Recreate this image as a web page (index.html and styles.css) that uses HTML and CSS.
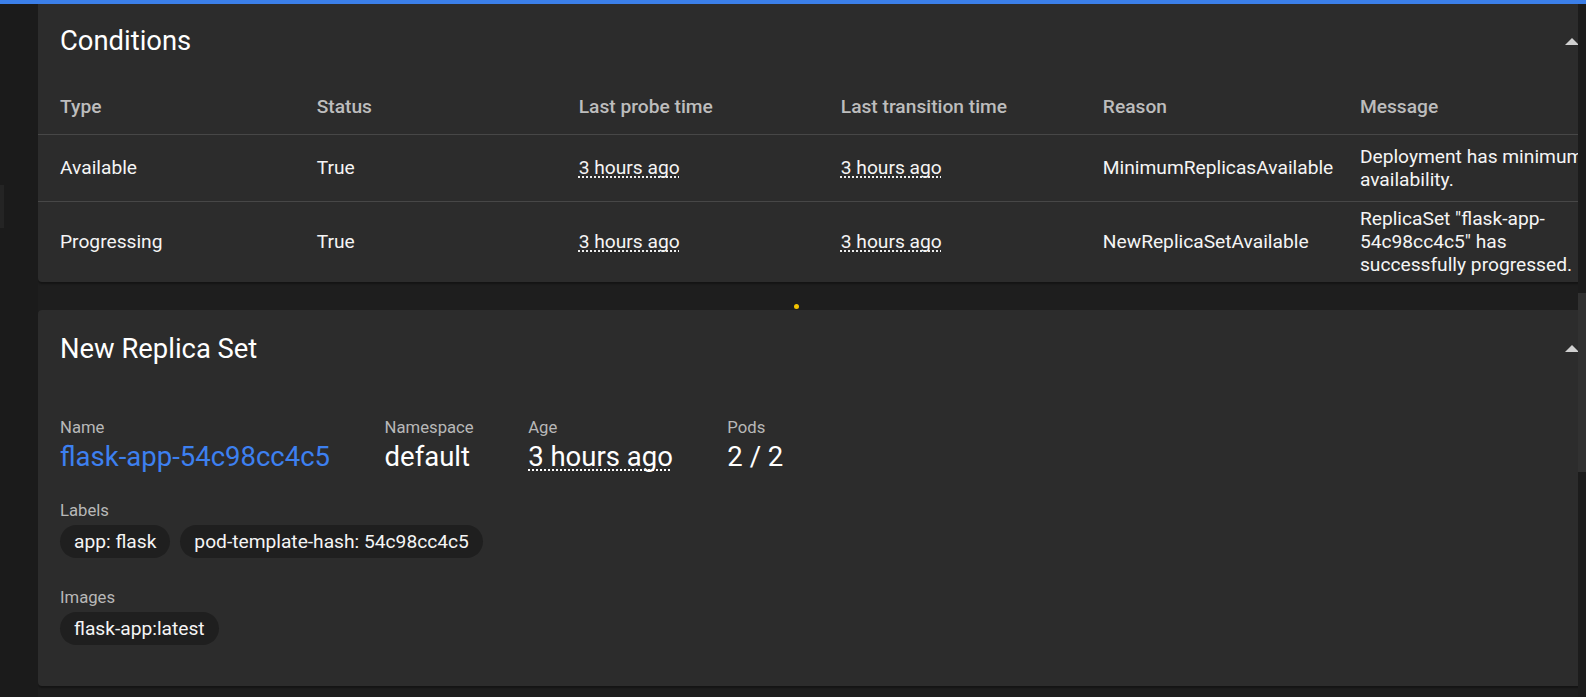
FILE: index.html
```html
<!DOCTYPE html>
<html lang="en">
<head>
<meta charset="utf-8">
<title>Deployment details</title>
<link rel="stylesheet" href="styles.css">
</head>
<body>
<div class="topbar"></div>
<div class="app">
  <aside class="sidebar"><div class="sidebar-tab"></div></aside>
  <main class="main">
    <section class="card card-conditions">
      <header class="card-header">
        <h2 class="card-title">Conditions</h2>
        <span class="caret"></span>
      </header>
      <table class="cond-table">
        <colgroup>
          <col class="col-type">
          <col class="col-mid">
          <col class="col-mid">
          <col class="col-mid">
          <col class="col-reason">
          <col class="col-message">
        </colgroup>
        <thead>
          <tr>
            <th>Type</th>
            <th>Status</th>
            <th>Last probe time</th>
            <th>Last transition time</th>
            <th>Reason</th>
            <th>Message</th>
          </tr>
        </thead>
        <tbody>
          <tr>
            <td>Available</td>
            <td>True</td>
            <td><span class="reltime">3 hours ago</span></td>
            <td><span class="reltime">3 hours ago</span></td>
            <td>MinimumReplicasAvailable</td>
            <td>Deployment has minimum availability.</td>
          </tr>
          <tr>
            <td>Progressing</td>
            <td>True</td>
            <td><span class="reltime">3 hours ago</span></td>
            <td><span class="reltime">3 hours ago</span></td>
            <td>NewReplicaSetAvailable</td>
            <td>ReplicaSet "flask-app-54c98cc4c5" has successfully progressed.</td>
          </tr>
        </tbody>
      </table>
    </section>

    <section class="card card-replica">
      <header class="card-header">
        <h2 class="card-title">New Replica Set</h2>
        <span class="caret"></span>
      </header>
      <div class="card-body">
        <div class="meta-row">
          <div class="meta">
            <div class="meta-label">Name</div>
            <a class="meta-value link" href="#">flask-app-54c98cc4c5</a>
          </div>
          <div class="meta">
            <div class="meta-label">Namespace</div>
            <div class="meta-value">default</div>
          </div>
          <div class="meta">
            <div class="meta-label">Age</div>
            <div class="meta-value"><span class="reltime reltime-lg">3 hours ago</span></div>
          </div>
          <div class="meta">
            <div class="meta-label">Pods</div>
            <div class="meta-value">2 / 2</div>
          </div>
        </div>
        <div class="section">
          <div class="meta-label">Labels</div>
          <div class="chips">
            <span class="chip">app: flask</span>
            <span class="chip">pod-template-hash: 54c98cc4c5</span>
          </div>
        </div>
        <div class="section section-images">
          <div class="meta-label">Images</div>
          <div class="chips">
            <span class="chip">flask-app:latest</span>
          </div>
        </div>
      </div>
    </section>

    <span class="activity-dot"></span>
  </main>
  <div class="scrollbar"><div class="scrollbar-thumb"></div></div>
</div>
</body>
</html>
```

FILE: styles.css
```css
* { box-sizing: border-box; }

html, body {
  margin: 0;
  height: 697px;
  overflow: hidden;
}

body {
  background: #1e1e1e;
  font-family: Roboto, "Noto Sans", "Liberation Sans", sans-serif;
  color: #ffffff;
}

.topbar {
  height: 4px;
  background: #3b7fe9;
}

.app {
  display: flex;
  height: 693px;
}

.sidebar {
  width: 38px;
  flex: none;
  background: #1b1b1b;
}

.sidebar-tab {
  margin-top: 181px;
  width: 4px;
  height: 43px;
  background: #242424;
}

.main {
  flex: 1;
  min-width: 0;
  overflow: hidden;
  position: relative;
  background: #1e1e1e;
}

.scrollbar {
  width: 8px;
  flex: none;
  background: #1c1c1c;
}

.scrollbar-thumb {
  margin-top: 289px;
  height: 179px;
  background: #313131;
}

.card {
  width: calc(100% + 23px);
  background: #2c2c2c;
  border-radius: 4px;
  box-shadow: 0 2px 2px rgba(0, 0, 0, 0.35);
  overflow: hidden;
}

.card-conditions {
  border-radius: 0 0 4px 4px;
}

.card-replica {
  margin-top: 28px;
}

.card-header {
  display: flex;
  align-items: center;
  justify-content: space-between;
  padding: 23px 22px 0;
}

.card-conditions .card-header {
  padding: 21px 22px 22px;
}

.card-title {
  margin: 0;
  font-size: 27.4px;
  font-weight: 400;
  line-height: 32px;
  color: #ffffff;
}

.caret {
  width: 0;
  height: 0;
  border-left: 7px solid transparent;
  border-right: 7px solid transparent;
  border-bottom: 7px solid #d0d0d0;
}

/* Conditions table */
.cond-table {
  table-layout: fixed;
  width: 1584px;
  border-collapse: collapse;
  font-size: 19.2px;
  line-height: 23px;
}

.col-type { width: 256.6px; }
.col-mid { width: 262px; }
.col-reason { width: 257px; }
.col-message { width: 284px; }

.cond-table th {
  text-align: left;
  font-weight: 500;
  color: #bdbdbd;
  height: 55px;
  padding: 0 22px;
  border-bottom: 1px solid #474747;
  vertical-align: middle;
  white-space: nowrap;
}

.cond-table td {
  padding: 6px 22px;
  height: 67px;
  border-bottom: 1px solid #474747;
  vertical-align: middle;
  color: #f5f5f5;
}

.cond-table tbody tr:last-child td {
  padding: 5px 22px 6px;
  border-bottom: none;
}

.reltime {
  text-decoration: underline dotted;
  text-decoration-skip-ink: none;
  text-underline-offset: 3px;
}

.reltime-lg {
  text-decoration-thickness: 2px;
  text-underline-offset: 4px;
}

/* Replica set details */
.card-body {
  padding: 53px 22px 41px;
}

.meta-row {
  display: flex;
  gap: 54.5px;
}

.meta-label {
  font-size: 16.7px;
  line-height: 20px;
  color: #b8b8b8;
}

.meta-value {
  display: block;
  margin-top: 3px;
  font-size: 27.5px;
  line-height: 32px;
  color: #ffffff;
}

.link {
  color: #3d80f0;
  text-decoration: none;
}

.section {
  margin-top: 28px;
}

.section-images {
  margin-top: 30px;
}

.chips {
  display: flex;
  gap: 10px;
  margin-top: 4px;
}

.chip {
  height: 33px;
  line-height: 33px;
  padding: 0 14px;
  border-radius: 17px;
  background: #1f1f1f;
  font-size: 19.2px;
  color: #f5f5f5;
  white-space: nowrap;
}

.activity-dot {
  position: absolute;
  left: 756px;
  top: 300px;
  width: 5px;
  height: 5px;
  border-radius: 50%;
  background: #f3c300;
}
```
